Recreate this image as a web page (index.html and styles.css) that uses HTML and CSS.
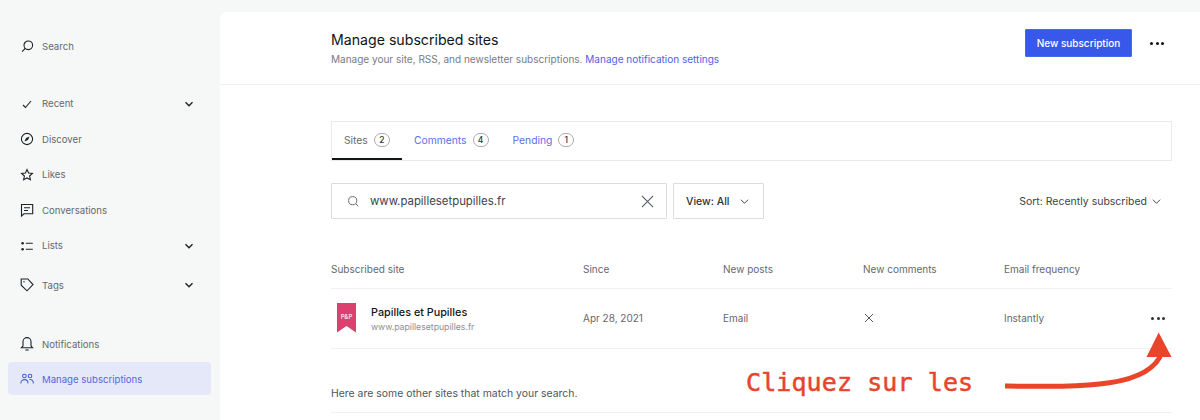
FILE: index.html
```html
<!DOCTYPE html>
<html lang="en">
<head>
    <meta charset="UTF-8">
    <meta name="viewport" content="width=device-width, initial-scale=1.0">
    <title>Manage subscribed sites</title>
    <link rel="stylesheet" href="styles.css">
</head>
<body>

<div class="layout">
    <nav class="sidebar">
        <a class="nav-item nav-search">
            <svg class="nav-icon" viewBox="0 0 16 16"><circle cx="9.300" cy="7.300" r="4.300"/><path d="M6.200 10.500 3 13.600"/></svg>
            <span>Search</span>
        </a>
        <a class="nav-item nav-recent">
            <svg class="nav-icon" viewBox="0 0 16 16"><path d="M4 9 6.500 11.500 12 5"/></svg>
            <span>Recent</span>
            <svg class="nav-chevron" viewBox="0 0 10 10"><path d="M1.500 3.200 5 6.700 8.500 3.200"/></svg>
        </a>
        <a class="nav-item">
            <svg class="nav-icon" viewBox="0 0 16 16"><circle cx="8" cy="8" r="5.600"/><path class="solid" d="M10.500 5.500 9 9 5.500 10.500 7 7Z"/></svg>
            <span>Discover</span>
        </a>
        <a class="nav-item">
            <svg class="nav-icon" viewBox="0 0 16 16"><path d="M8 2.600 9.600 6l3.800.5-2.800 2.500.8 3.700L8 10.900l-3.400 1.800.8-3.700-2.800-2.500L6.400 6Z"/></svg>
            <span>Likes</span>
        </a>
        <a class="nav-item">
            <svg class="nav-icon" viewBox="0 0 16 16"><path d="M2.500 2.500h11.200v9.300H5l-2.500 2.200Z"/><path d="M5 5.800h6M5 8.500h4"/></svg>
            <span>Conversations</span>
        </a>
        <a class="nav-item">
            <svg class="nav-icon" viewBox="0 0 16 16"><circle class="solid" cx="3.600" cy="5.300" r="1.300"/><circle class="solid" cx="3.600" cy="11.300" r="1.300"/><path d="M6.800 5.300h7M6.800 11.300h7"/></svg>
            <span>Lists</span>
            <svg class="nav-chevron" viewBox="0 0 10 10"><path d="M1.500 3.200 5 6.700 8.500 3.200"/></svg>
        </a>
        <a class="nav-item nav-tags">
            <svg class="nav-icon" viewBox="0 0 16 16"><path d="M2.200 2h6.600l5.200 5.600-6 6.200-5.800-5.600Z"/><circle class="solid" cx="5" cy="4.800" r=".7"/></svg>
            <span>Tags</span>
            <svg class="nav-chevron" viewBox="0 0 10 10"><path d="M1.500 3.200 5 6.700 8.500 3.200"/></svg>
        </a>
        <a class="nav-item nav-notifications">
            <svg class="nav-icon" viewBox="0 0 16 16"><path d="M2.400 11.800h11.200l-1.600-2V5.600a4 4 0 0 0-8 0v4.200Z"/><path d="M6.400 14h3.200"/></svg>
            <span>Notifications</span>
        </a>
        <a class="nav-item nav-active">
            <svg class="nav-icon" viewBox="0 0 16 16"><circle cx="5.400" cy="5" r="1.800"/><circle cx="11" cy="5" r="1.800"/><path d="M1.800 12.400c0-5 7.200-5 7.200 0M10.400 8.600c2.400-.3 4 1.200 4 3.800"/></svg>
            <span>Manage subscriptions</span>
        </a>
    </nav>

    <main class="panel">
        <header class="panel-header">
            <div>
                <h1>Manage subscribed sites</h1>
                <p>Manage your site, RSS, and newsletter subscriptions. <a class="link">Manage notification settings</a></p>
            </div>
            <div class="header-actions">
                <button class="btn-primary">New subscription</button>
                <span class="dots dots-dark"><i></i><i></i><i></i></span>
            </div>
        </header>

        <section class="content">
            <div class="tabs">
                <a class="tab tab-active">Sites <span class="count">2</span></a>
                <a class="tab">Comments <span class="count">4</span></a>
                <a class="tab">Pending <span class="count">1</span></a>
            </div>

            <div class="filters">
                <div class="search-box">
                    <svg class="search-icon" viewBox="0 0 16 16"><circle cx="7" cy="7" r="5"/><path d="M10.700 10.700 14 14"/></svg>
                    <span class="search-value">www.papillesetpupilles.fr</span>
                    <svg class="search-clear" viewBox="0 0 14 14"><path d="M1 1 13 13M13 1 1 13"/></svg>
                </div>
                <div class="view-select">
                    View: All
                    <svg class="chevron" viewBox="0 0 10 10"><path d="M1 3 5 7 9 3"/></svg>
                </div>
                <div class="sort">
                    Sort: Recently subscribed
                    <svg class="chevron" viewBox="0 0 10 10"><path d="M1 3 5 7 9 3"/></svg>
                </div>
            </div>

            <div class="table-row table-head">
                <span>Subscribed site</span>
                <span>Since</span>
                <span>New posts</span>
                <span>New comments</span>
                <span>Email frequency</span>
            </div>
            <div class="table-row site-row">
                <div class="site">
                    <div class="site-logo">P&amp;P</div>
                    <div class="site-text">
                        <div class="site-name">Papilles et Pupilles</div>
                        <div class="site-url">www.papillesetpupilles.fr</div>
                    </div>
                </div>
                <span>Apr 28, 2021</span>
                <span>Email</span>
                <svg class="cell-x" viewBox="0 0 10 10"><path d="M1 1 9 9M9 1 1 9"/></svg>
                <div class="cell-last">
                    <span>Instantly</span>
                    <span class="dots"><i></i><i></i><i></i></span>
                </div>
            </div>
            <p class="other-sites">Here are some other sites that match your search.</p>
        </section>
    </main>
</div>

<!-- red note drawn over the screenshot -->
<div class="note">Cliquez sur les</div>
<svg class="note-arrow" viewBox="0 0 1200 420">
    <path class="note-line" d="M1005 386C1085 387 1150 388 1162 352"/>
    <path class="note-head" d="M1158.700 332.500 1171.500 357 1146.500 357Z"/>
</svg>

</body>
</html>
```

FILE: styles.css
```css
html, body {
    margin: 0;
    padding: 0;
    height: 100%;
    overflow: hidden;
    background-color: #f6f7f7;
    font-family: Inter, "Liberation Sans", sans-serif;
    color: #50575e;
}

a {
    text-decoration: none;
}

.layout {
    display: flex;
    height: 420px;
}

/* Sidebar */
.sidebar {
    width: 220px;
    flex-shrink: 0;
    box-sizing: border-box;
    padding: 28px 9px 0 8px;
}

.nav-item {
    display: flex;
    align-items: center;
    height: 35.6px;
    padding: 0 17px 0 11px;
    font-size: 9.6px;
    color: #646970;
}

.nav-item span {
    flex: 1;
}

.nav-search {
    height: 36px;
}

.nav-recent {
    margin-top: 21.8px;
}

.nav-tags {
    margin-top: 3.7px;
}

.nav-notifications {
    margin-top: 23.5px;
}

.nav-active {
    box-sizing: border-box;
    height: 33px;
    padding-top: 1px;
    border-radius: 4px;
    background-color: #e5e8f9;
    color: #5566e0;
}

.nav-icon {
    width: 16px;
    height: 16px;
    margin-right: 7px;
    fill: none;
    stroke: #1d2327;
    stroke-width: 1.1;
}

.nav-icon .solid {
    fill: #1d2327;
    stroke: none;
}

.nav-active .nav-icon {
    stroke: #4f5fd5;
}

.nav-chevron {
    width: 10px;
    height: 10px;
    fill: none;
    stroke: #1d2327;
    stroke-width: 1.4;
}

/* Main panel */
.panel {
    flex: 1;
    margin-top: 12px;
    background-color: white;
    border-top-left-radius: 8px;
    overflow: hidden;
}

.panel-header {
    display: flex;
    justify-content: space-between;
    align-items: center;
    box-sizing: border-box;
    height: 73px;
    padding: 0 36px 0 111px;
    border-bottom: 1px solid #f0f1f2;
}

.panel-header h1 {
    margin: 0 0 2px;
    font-size: 14.15px;
    font-weight: 400;
    line-height: 20px;
    color: #101517;
}

.panel-header p {
    margin: 0;
    font-size: 10.02px;
    line-height: 15px;
    color: #787c82;
}

.link {
    color: #4f63e0;
}

.header-actions {
    display: flex;
    align-items: center;
    gap: 18px;
    margin-bottom: 10px;
}

.btn-primary {
    width: 107px;
    height: 28px;
    padding: 0;
    border: 1px solid #4a68ec;
    border-radius: 1px;
    background-color: #3858e9;
    color: white;
    font-family: inherit;
    font-size: 10px;
    font-weight: 500;
}

.dots {
    display: inline-flex;
    gap: 2.5px;
}

.dots i {
    width: 3px;
    height: 3px;
    border-radius: 50%;
    background-color: #2c3338;
}

.dots-dark i {
    background-color: #101517;
}

.content {
    padding: 36px 28px 0 111px;
}

/* Tabs */
.tabs {
    display: flex;
    box-sizing: border-box;
    height: 40px;
    border: 1px solid #e8eaeb;
}

.tab {
    display: flex;
    align-items: center;
    gap: 6px;
    box-sizing: border-box;
    height: 38px;
    padding: 0 12px;
    border-bottom: 2px solid transparent;
    font-size: 10.3px;
    color: #5c6fe6;
}

.tab-active {
    width: 70px;
    border-bottom-color: #101517;
    color: #646970;
}

.count {
    display: inline-block;
    min-width: 16px;
    height: 14px;
    box-sizing: border-box;
    border: 1px solid #a7aaad;
    border-radius: 8px;
    font-size: 8.5px;
    font-weight: 500;
    line-height: 12px;
    text-align: center;
    color: #2c3338;
}

/* Search and filters */
.filters {
    display: flex;
    align-items: center;
    margin-top: 22px;
    height: 36px;
}

.search-box {
    display: flex;
    align-items: center;
    box-sizing: border-box;
    width: 336px;
    height: 36px;
    padding: 0 12px 0 15px;
    border: 1px solid #dcdcde;
    border-radius: 1px;
}

.search-icon {
    width: 13px;
    height: 13px;
    margin-right: 10px;
    fill: none;
    stroke: #646970;
    stroke-width: 1.2;
}

.search-value {
    flex: 1;
    font-size: 11.4px;
    color: #3c434a;
}

.search-clear {
    width: 13px;
    height: 13px;
    fill: none;
    stroke: #50575e;
    stroke-width: 1.1;
}

.view-select {
    display: flex;
    align-items: center;
    gap: 10px;
    box-sizing: border-box;
    width: 91px;
    height: 36px;
    margin-left: 6px;
    padding-left: 12px;
    border: 1px solid #dcdcde;
    border-radius: 1px;
    font-size: 10.5px;
    font-weight: 500;
    color: #2c3338;
}

.sort {
    display: flex;
    align-items: center;
    gap: 5px;
    margin-left: auto;
    padding-right: 11px;
    font-size: 10.5px;
    color: #3c434a;
}

.chevron {
    width: 9px;
    height: 9px;
    fill: none;
    stroke: #3c434a;
    stroke-width: 1.1;
}

/* Table */
.table-row {
    display: grid;
    grid-template-columns: 252px 140px 140px 141px 1fr;
    align-items: center;
    box-sizing: border-box;
    border-bottom: 1px solid #f0f1f2;
    font-size: 10px;
    color: #646970;
}

.table-head {
    height: 70px;
    padding-top: 31px;
}

.site-row {
    height: 60px;
    padding-bottom: 2px;
}

.site {
    display: flex;
    align-items: center;
    gap: 15px;
    padding-left: 6px;
}

.site-logo {
    width: 19px;
    height: 30px;
    box-sizing: border-box;
    padding-top: 10px;
    background-color: #d9426f;
    clip-path: polygon(0 0, 100% 0, 100% 100%, 50% 78%, 0 100%);
    font-size: 6px;
    font-weight: 700;
    line-height: 8px;
    text-align: center;
    color: #f7d5df;
}

.site-text {
    padding-top: 2px;
}

.site-name {
    margin-bottom: 1px;
    font-size: 10.8px;
    font-weight: 500;
    line-height: 15px;
    color: #101517;
}

.site-url {
    font-size: 8.7px;
    line-height: 12px;
    color: #8c8f94;
}

.cell-x {
    width: 10px;
    height: 10px;
    margin-left: 1px;
    fill: none;
    stroke: #50575e;
    stroke-width: 1;
}

.cell-last {
    display: flex;
    justify-content: space-between;
    align-items: center;
    padding-right: 7px;
}

.cell-last .dots {
    margin-top: 2px;
}

.other-sites {
    margin: 0;
    box-sizing: border-box;
    height: 64px;
    padding-top: 37px;
    border-bottom: 1px solid #f0f1f2;
    font-size: 10.45px;
    line-height: 15px;
    color: #50575e;
}

/* Note over the page */
.note {
    position: absolute;
    left: 746px;
    top: 367px;
    font-family: "DejaVu Sans Mono", monospace;
    font-size: 25px;
    line-height: 32px;
    letter-spacing: 0.1px;
    -webkit-text-stroke: 0.5px #e8452a;
    color: #e8452a;
    white-space: nowrap;
}

.note-arrow {
    position: absolute;
    left: 0;
    top: 0;
    width: 1200px;
    height: 420px;
    pointer-events: none;
}

.note-line {
    fill: none;
    stroke: #e8452a;
    stroke-width: 5;
}

.note-head {
    fill: #e8452a;
}
```
